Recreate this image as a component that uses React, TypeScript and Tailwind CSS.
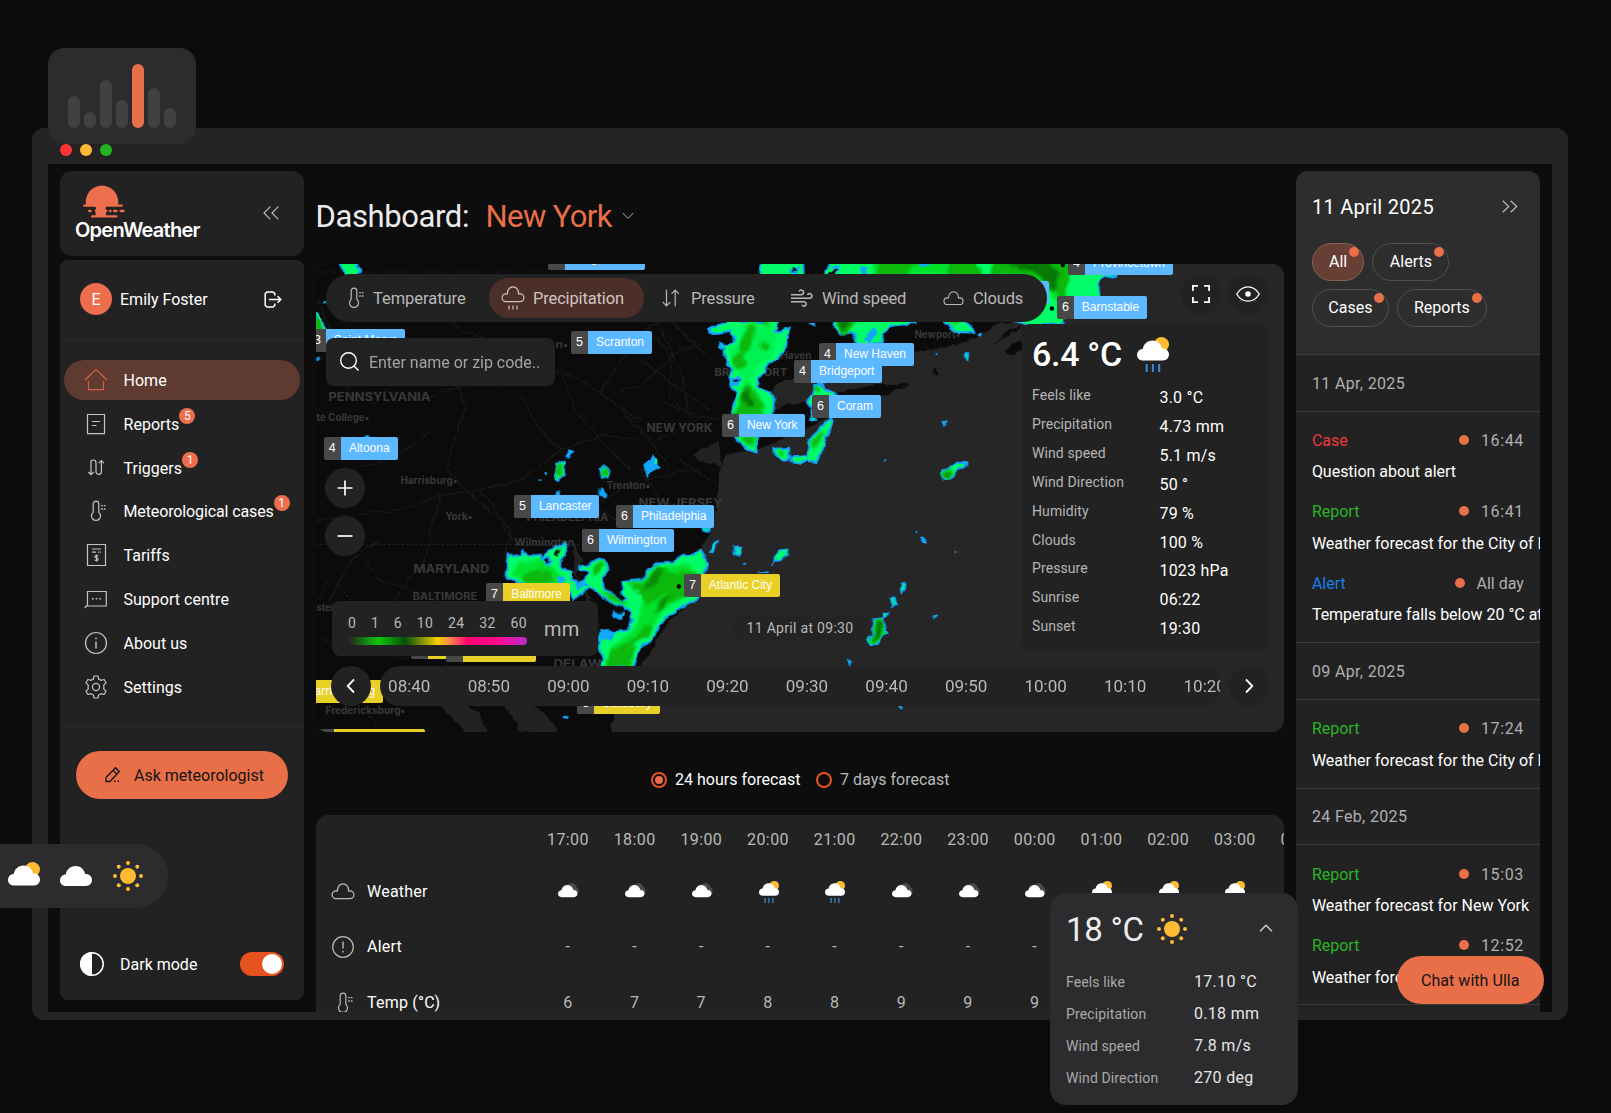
import React from "react";

type P = { className?: string };

/* ---------- icons ---------- */

const Thermo = ({ className = "" }: P) => (
  <svg className={className} width="16" height="22" viewBox="0 0 16 22" fill="none" stroke="currentColor" strokeWidth="1.2">
    <path d="M3.2 12.4V4a2.8 2.8 0 0 1 5.600 0v8.400a4.500 4.500 0 1 1-5.600 0Z" />
    <path d="M11.2 5.600h1.600M13.800 5.600h1.700M11.2 9h1.600M13.800 9h1.700" strokeWidth="1.400" />
  </svg>
);

const CLOUD_LINE =
  "M5 15.600h14a3.900 3.900 0 0 0 0-7.800c-.5 0-.9.1-1.300.2C17.700 3.900 15.400.8 12 .8S6.300 3.900 6.300 8C5.900 7.900 5.500 7.800 5 7.800a3.900 3.900 0 0 0 0 7.800Z";

const CloudLine = ({ className = "", w = 24 }: P & { w?: number }) => (
  <svg className={className} width={w} height={(w * 17) / 24} viewBox="0 0 24 17" fill="none" stroke="currentColor" strokeWidth="1.3">
    <path d={CLOUD_LINE} strokeLinejoin="round" />
  </svg>
);

const CLOUD = "M6 20C2.600 20 0 17.800 0 14.500S2.500 8.500 5.800 8.500C6.500 3.500 10.500 0 15.500 0s8.800 3.500 9.700 8.100C29.500 8 32 10.800 32 14s-2.500 6-6 6Z";

const CloudFill = ({ w = 32 }: { w?: number }) => (
  <svg width={w} height={(w * 20) / 32} viewBox="0 0 32 20">
    <path d={CLOUD} fill="#fff" />
  </svg>
);

const CloudSun = ({ w = 32, rain = false }: { w?: number; rain?: boolean }) => (
  <svg width={w} height={(w * 35) / 32} viewBox="0 0 32 35">
    <circle cx="24.500" cy="7.500" r="7.500" fill="#ffbb33" />
    <path d={CLOUD} transform="translate(0 3.500)" fill="#fff" />
    {rain && <path d="M9.700 27v8M15.900 27v8M22.200 27v8" stroke="#3a8bdc" strokeWidth="2" />}
  </svg>
);

const BrokenClouds = () => (
  <svg width="22" height="16" viewBox="0 0 22 16">
    <path d="M8.500 6a5 5 0 0 1 9.400-2.200c.4.700.6 1.200.8 1.800A3.600 3.600 0 0 1 19 12l-5 1Z" fill="#4a4a4a" />
    <path d={CLOUD} transform="translate(0 3) scale(.61)" fill="#fff" />
  </svg>
);

const Sun = () => (
  <svg width="32" height="32" viewBox="0 0 32 32" fill="#ffbb33">
    <circle cx="16" cy="16" r="8" />
    {[
      [16, 3], [16, 29], [3, 16], [29, 16], [6.800, 6.800], [25.200, 6.800], [6.800, 25.200], [25.200, 25.200],
    ].map(([x, y]) => (
      <circle key={`${x}-${y}`} cx={x} cy={y} r="2" />
    ))}
  </svg>
);

const S = ({ children, w = 24, h = 24, sw = 1.2, className = "" }: React.PropsWithChildren<{ w?: number; h?: number; sw?: number; className?: string }>) => (
  <svg className={className} width={w} height={h} viewBox={`0 0 ${w} ${h}`} fill="none" stroke="currentColor" strokeWidth={sw}>
    {children}
  </svg>
);

const HomeIcon = () => (
  <S>
    <path d="M1 12 12 1.500 23 12M4.500 13.200v8.500h15v-8.500" />
  </S>
);
const ReportIcon = () => (
  <S>
    <path d="M3.500 2.500h17v19.200h-17ZM8 9.500h8M8 13.500h4.500" />
  </S>
);
const TriggerIcon = () => (
  <S>
    <path d="M7 4.500v14M4.300 16 7 18.700 9.700 16M7 6.500a2.500 2.500 0 0 1 5 0v9.200a2.700 2.700 0 0 0 5.400 0V5M14.800 7.200l2.600-2.600L20 7.200" />
  </S>
);
const TariffIcon = () => (
  <S>
    <path d="M3.500 1.500h18v21h-18ZM8 6h9M8 9.200h4M14 9.200h1.200M16 9.200h1" />
    <path d="M14.200 13.200c-.4-.8-3.400-1-3.400.6 0 1.500 3.500.9 3.500 2.500 0 1.500-3.200 1.500-3.700.3M12.500 11.600v7" strokeWidth="1.100" />
  </S>
);
const SupportIcon = () => (
  <S>
    <path d="M.6 21l2.900-3V4.500h18.800V19H3" />
    <path d="M8 11.700h1.600M11.700 11.700h1.600M15.400 11.700H17" strokeWidth="1.600" />
  </S>
);
const InfoIcon = () => (
  <S>
    <circle cx="12" cy="12" r="10.500" />
    <path d="M12 10.500v7M12 6.500v1.700" strokeWidth="1.400" />
  </S>
);
const AlertIcon = () => (
  <S>
    <circle cx="12" cy="12" r="10.300" />
    <path d="M12 6.500v7M12 15.800v1.700" strokeWidth="1.400" />
  </S>
);
const GearIcon = () => (
  <S>
    <circle cx="12" cy="12" r="3.600" />
    <path
      strokeLinejoin="round"
      d="M10.100 1h3.800l.8 3.100a8 8 0 0 1 2.300 1.300l3.100-.9 1.900 3.300L19.700 10.100a8 8 0 0 1 0 3.800l2.300 2.300-1.900 3.300-3.100-.9a8 8 0 0 1-2.300 1.300l-.8 3.100h-3.800l-.8-3.100A8 8 0 0 1 7 18.600l-3.100.9L2 16.200l2.300-2.300a8 8 0 0 1 0-3.800L2 7.800l1.900-3.300 3.100.9a8 8 0 0 1 2.300-1.300Z"
    />
  </S>
);
const PressureIcon = () => (
  <S w={18} h={18}>
    <path d="M4.500.8v16M.8 13.200l3.700 3.800 3.700-3.800M13.200 17.300v-16M9.500 4.900l3.700-3.800 3.700 3.800" />
  </S>
);
const WindIcon = () => (
  <S w={22} h={18} sw={1.500}>
    <path d="M0 5.700h10.200a2.300 2.300 0 1 0-2.100-3.200M0 9.200h18.700a2.300 2.300 0 1 0-2.200-3.100M0 12.700h13a2.200 2.200 0 1 1-2 3.100" />
  </S>
);
const PrecipIcon = () => (
  <S w={24} h={24}>
    <path d={CLOUD_LINE} strokeLinejoin="round" />
    <path d="M8 19.500v4M12 19.500v4M16 19.500v4" />
  </S>
);

/* ---------- map ---------- */

type Pin = { x: number; y: number; w: number; n: number; name: string; yellow?: boolean };
const pins: Pin[] = [
  { x: 548.5, y: 247, w: 97, n: 4, name: "Binghamton" },
  { x: 309, y: 329, w: 96, n: 3, name: "Saint Marys" },
  { x: 571, y: 331, w: 81, n: 5, name: "Scranton" },
  { x: 323.8, y: 437, w: 74, n: 4, name: "Altoona" },
  { x: 514, y: 495, w: 85.5, n: 5, name: "Lancaster" },
  { x: 616, y: 505, w: 98.5, n: 6, name: "Philadelphia" },
  { x: 582, y: 529, w: 92.5, n: 6, name: "Wilmington" },
  { x: 486, y: 583, w: 84, n: 7, name: "Baltimore", yellow: true },
  { x: 684, y: 574, w: 96, n: 7, name: "Atlantic City", yellow: true },
  { x: 819, y: 343, w: 95, n: 4, name: "New Haven" },
  { x: 794, y: 360, w: 88.5, n: 4, name: "Bridgeport" },
  { x: 812, y: 395, w: 69, n: 6, name: "Coram" },
  { x: 722, y: 414, w: 83.5, n: 6, name: "New York" },
  { x: 957, y: 281, w: 92, n: 5, name: "Providence" },
  { x: 1057, y: 296, w: 90, n: 6, name: "Barnstable" },
  { x: 1068, y: 252, w: 105, n: 4, name: "Provincetown" },
  { x: 411, y: 636, w: 90, n: 8, name: "Arlington", yellow: true },
  { x: 446, y: 639.5, w: 90, n: 8, name: "Alexandria", yellow: true },
  { x: 281, y: 680, w: 102, n: 9, name: "Harrisonburg", yellow: true },
  { x: 577.5, y: 691.5, w: 82.5, n: 8, name: "Salisbury", yellow: true },
  { x: 317, y: 729, w: 108, n: 9, name: "Charlottesville", yellow: true },
];

const MapPin = ({ p }: { p: Pin }) => (
  <div
    className="absolute flex h-[22.500px] overflow-hidden rounded-[2px] font-['Liberation_Sans',Arial,sans-serif] text-[12px] leading-[22.500px] text-white"
    style={{ left: p.x - 315.6, top: p.y - 264, width: p.w }}
  >
    <span className="w-[17px] shrink-0 bg-[#484848] text-center text-[12.500px]">{p.n}</span>
    <span className={`flex-1 whitespace-nowrap text-center ${p.yellow ? "bg-[#e9d026]" : "bg-[#5cb8ff]"}`}>{p.name}</span>
  </div>
);

const places: [string, number, number, number, number][] = [
  ["PENNSYLVANIA", 328, 401, 102, 11.5],
  ["te College•", 316, 421, 53, 10],
  ["Harrisburg•", 400, 484, 57, 10],
  ["York•", 445, 520, 27, 10],
  ["Trenton•", 606, 489, 44, 10],
  ["NEW YORK", 646, 432, 66, 11.5],
  ["NEW JERSEY", 638, 507, 84, 11.5],
  ["PHILADELPHIA", 526, 521, 82, 10.5],
  ["Wilmington", 514, 546, 60, 10],
  ["MARYLAND", 413, 573, 76, 11.5],
  ["BALTIMORE", 412, 600, 65, 10.5],
  ["ster", 316, 611, 18, 10],
  ["DELAWARE", 553, 668, 74, 11.5],
  ["Fredericksburg•", 325, 714, 80, 10],
  ["Newport•", 914, 338, 46, 10],
  ["BRIDGEPORT", 714, 376, 73, 10.5],
  ["Haven", 780, 359, 31, 10],
  ["n•", 555, 348, 13, 10],
];

const MapCanvas = () => (
  <svg className="absolute inset-0" width="969" height="468" viewBox="315.6 264 969 468">
    <defs>
      <filter id="ragged" x="-5%" y="-5%" width="110%" height="110%" colorInterpolationFilters="sRGB">
        <feTurbulence type="fractalNoise" baseFrequency="0.11" numOctaves="2" seed="4" result="n" />
        <feDisplacementMap in="SourceGraphic" in2="n" scale="6" xChannelSelector="R" yChannelSelector="G" />
      </filter>
      <filter id="soft" x="-5%" y="-5%" width="110%" height="110%" colorInterpolationFilters="sRGB">
        <feGaussianBlur stdDeviation="5" />
      </filter>
    </defs>
    <rect x="315" y="264" width="970" height="468" fill="#262626" />
    <g filter="url(#ragged)">
      <path
        fill="#0b0b0b"
        d="M300 250H1110L1090 290 1060 318 1030 322 1010 322 993 326 978 336 955 345 925 350 905 354 870 358 845 368 800 376 775 384 768 402 790 404 815 400 850 390 880 384 911 384 890 393 862 402 835 414 800 432 760 448 725 455 719 473 717 503 709 535 697 555 700 580 690 602 665 625 652 650 636 670 618 700 606 745H300Z"
      />
      <path d="M768 392 745 428 728 434 790 402ZM692 455 718 440 722 466 700 462ZM440 706 462 728 470 745 490 740 478 712 460 704ZM500 700 520 732 560 735 545 712 525 702ZM572 540 582 560 576 575 590 600 604 640 596 620 574 575Z" fill="#222" />
      <path d="M1023 325 1008 336 993 344 1010 330ZM1022 338 1004 350 1010 356 1022 350ZM932 372 936 366 938 375Z" fill="#0b0b0b" />
    </g>
    <g fill="none" stroke="#1b1b1b" strokeWidth="1.100" filter="url(#ragged)">
      <path d="M318 300 330 330 350 395 385 392 430 396 470 384 500 386 530 382 560 370 600 392 615 405 640 420M458 384 465 410 452 445 446 468 470 495 500 520 515 545M600 392 622 360 645 330 660 322M430 430 405 450 380 462 350 470M316 520 350 515 400 510 440 495 480 490 520 480 560 450 600 435 640 440M560 370 575 410 600 440 630 470M440 495 430 530 425 560 400 590 380 620M480 490 510 530 505 560M620 390 640 385 680 350 700 345M660 330 680 370 690 420M520 395 540 430 560 450M365 560 380 580 410 590 440 600M380 540 350 560 330 600 350 620M320 640 360 650 400 660 440 650M640 470 660 500 700 520M600 500 640 480 690 470M690 300 720 320M430 300 460 330 520 350M640 300 670 310M360 700 380 732M470 620 450 660 430 700" />
      <path d="M640 330q40 20 30 50t50 40M660 400l40 20M655 440l40-20M680 460l30 20M650 300l60 60M620 410l30 30 20 30M560 500l40 10 30 20M640 360l40 30 30 20" />
    </g>
    <path d="M316 272H560M316 544.500H590M670 340 720 375M318 600 330 575 350 600" strokeDasharray="1.500 3" stroke="#2b2b2b" fill="none" />
    <g fill="#383838" fontFamily="Inter, sans-serif" fontWeight="700">
      {places.map(([t, x, y, w, s]) => (
        <text key={t} x={x} y={y} fontSize={s} textLength={w} lengthAdjust="spacingAndGlyphs">
          {t}
        </text>
      ))}
    </g>

    <g filter="url(#ragged)">
      {/* radar: upper half */}
      <g transform="translate(640 240) scale(.33333)" strokeLinejoin="round">
        <g fill="#00fd68" stroke="#12a6ff" strokeWidth="6">
          <path d="M262 246 204 266 206 282 235 281 266 272 283 285 280 308 262 320 236 306 240 318 252 324 255 360 266 378 276 385 272 420 276 445 290 455 278 500 276 560 286 600 322 626 345 637 350 590 382 560 398 520 400 475 388 455 350 440 352 415 378 395 384 370 410 358 432 330 440 290 448 262 405 278 410 246Z" />
          <path d="M364 60 358 110H490L488 60Z" />
          <path d="M580 60 552 90 552 110H1240V60Z" />
          <path d="M580 240 584 264 600 284 640 280 650 312H720L728 282 750 258 825 248V240Z" />
          <path d="M905 240 935 262 950 276 1000 278 993 262 972 240Z" />
          <path d="M515 462 522 432 545 432 556 450 580 458 590 476H528L524 545 512 540 514 505 500 485Z" />
          <path d="M572 535 518 588 505 612 498 648 455 652 450 664 480 672 500 662 526 670 542 640 560 585 580 540Z" />
          <path d="M402 626 446 624 446 658 425 660 403 648Z" />
          <path d="M900 698 925 684 955 668 978 670 976 680 950 692 935 712 912 718Z" />
          <ellipse cx="977" cy="351" rx="6" ry="9" />
        </g>
        <path
          d="M1120 244 1165 254 1268 246 1275 180 1380 176 1376 140 1374 124 1384 112 1404 112 1430 104V60H1100Z"
          fill="#00fd68"
        />
        <path d="M1120 246 1165 256 1270 248M1376 165 1374 124 1384 112 1404 112 1430 104" fill="none" stroke="#12a6ff" strokeWidth="6" />
        <g fill="#00e22c" filter="url(#soft)">
          <path d="M310 250 390 250 410 290 400 340 350 380 330 430 362 470 366 530 330 560 284 540 300 480 310 430 276 370 274 330 300 300Z" opacity=".4" />
          <path d="M700 60H920V102H700ZM1060 60H1300L1260 200 1200 120Z" />
        </g>
        <g fill="#0cb80c" filter="url(#soft)">
          <path d="M325 258 345 254 340 290 322 330 304 350 324 368 305 387 278 378 274 352 298 338 302 298Z" />
          <path d="M360 240h30l-12 22ZM372 302l14 18-14 14-14-14ZM318 430 345 455 370 500 366 528 280 526 300 480Z" />
          <path d="M292 588h52l-4 30-22-6Z" />
          <path d="M590 240h52l-20 46-20-4ZM914 238h50l-18 20ZM530 432l14 18-14 8-12-12ZM554 568l-18 40-18 22-6-18 20-28ZM412 630l22 6-12 16ZM902 702l22-14 16 8-10 16-14 4Z" />
          <path d="M716 60H835L790 110H708ZM925 60H1000L1030 110H916ZM1060 60 1300 60 1270 190 1240 150 1200 106H1050Z" />
        </g>
        <g fill="#067a06" filter="url(#soft)">
          <path d="M304 470 316 442 328 470 342 492 320 502ZM1090 66 1210 66 1262 98 1236 160 1200 104ZM592 246 628 246 610 276ZM910 704l14-8 8 4-12 10Z" />
        </g>
        <g fill="#12a6ff">
          <path d="M8 672 28 662 36 640 46 660 62 680 40 690 20 712Z" />
          <path d="M676 282 708 264 714 280 690 306 672 300ZM905 540 925 540 912 562ZM660 84 684 80 682 102H660ZM276 410 298 410 296 440 276 440ZM834 66h34l-10 16h-18ZM1010 280l18-6-8 16ZM500 246h24v14ZM450 86 480 74 470 102H450ZM570 80 600 74 590 102Z" />
          <circle cx="734" cy="662" r="4" />
          <circle cx="890" cy="343" r="4" />
        </g>
        <path d="M48 672a6 6 0 1 1 .1 0Z" fill="#00fd9a" />
        <path d="M286 415l8 6-8 8-5-7ZM462 80 470 88 452 98ZM582 86 594 88 578 102H562Z" fill="#0b0b0b" />
      </g>

      {/* radar: western edge */}
      <path d="M336 258h18l6 13-8 7-6-2Z" fill="#00fd68" stroke="#12a6ff" strokeWidth="2" />
      <path d="M308 310q14 4 16 22l-4 6h-12Z" fill="#0cb80c" stroke="#12d6c0" strokeWidth="2.500" />
      <g fill="#12a6ff">
        <circle cx="325" cy="303" r="1.500" />
        <circle cx="317" cy="358.500" r="1.500" />
        <circle cx="366" cy="437" r="2" />
        <circle cx="545" cy="473.500" r="1.500" />
        <circle cx="540" cy="481" r="1" />
        <path d="M566 458 568 449 572 451 570 459ZM556 492 558 490 561 497H554ZM600 487 606 494 604 499 598 494ZM706 330 712 325V336Z" />
      </g>

      {/* radar: Chesapeake and Delaware */}
      <g transform="translate(310 460) scale(.33333)" strokeLinejoin="round">
        <g fill="#00fd68" stroke="#12a6ff" strokeWidth="6">
          <path d="M735 55 740 10 765 2 762 45 745 60ZM870 28 882 14 898 32 892 52 874 56Z" />
          <path d="M592 280 604 292 634 285 640 270 652 290 688 284 694 300 712 270 730 262 755 256 768 250 766 290 746 304 756 325 784 335 784 358 802 370 820 362 838 338 806 328 806 320 836 314 862 292 884 296 894 326 876 360 882 385 916 412 936 424 950 416 934 396 930 366 996 360 1014 330 1036 310 1090 308 1112 288 1150 286 1170 268 1180 284 1192 310 1178 350 1180 400 1150 420 1126 432 1100 450 1064 475 1040 510 1022 545 990 560 970 620 870 622 880 600 866 560 866 520 900 516 950 512 966 484 960 456 940 440 905 430 865 400 838 378 815 400 790 420 770 376 640 374 586 350Z" />
        </g>
        <g fill="#00e22c" filter="url(#soft)">
          <path d="M620 310 700 300 750 340 760 366 640 366 606 346ZM1000 370 1040 325 1130 310 1155 340 1155 385 1110 420 1050 460 1010 530 960 545 950 618 894 618 904 565 940 535 980 495 990 450Z" />
        </g>
        <g fill="#0cb80c" filter="url(#soft)">
          <path d="M640 350 680 326 722 340 734 372H640ZM735 44 745 8 760 16 752 50ZM872 36 884 20 896 36 882 54Z" />
          <path d="M950 370 1000 366 1036 318 1060 330 1092 340 1062 400 1010 440 990 400ZM850 320 876 296 884 316 850 354ZM870 388 940 424 956 438 900 420ZM1080 350l40-20 40 10-4 50-60 30-40 20ZM920 560 990 526 1000 496 1024 498 1010 532 972 552 960 620H886L900 580Z" />
        </g>
        <path d="M1040 322 1056 330 1040 370 1000 392 1014 360ZM1050 420l30-20-20 44-24 16Z" fill="#078c07" filter="url(#soft)" />
        <g fill="#12a6ff">
          <path d="M742 345l20 4 4 16-18 4ZM700 292l14-4 10 16-12 18-10-12ZM790 366l50 2-40 20ZM906 450 926 460 940 450 930 480 910 476ZM870 508l40 4-4 30-36-4Z" />
        </g>
        <path d="M704 298l8-4 3 10-7 4ZM736 270l10-4-4 24-12-6Z" fill="#0b0b0b" />
        <circle cx="764" cy="772" r="7" fill="#12a6ff" />
      </g>

      {/* radar: Atlantic cells */}
      <g transform="translate(640 460) scale(.33333)" fill="#00e5a0" stroke="#12a6ff" strokeWidth="5" strokeLinejoin="round">
        <path d="M402 288 420 270 442 268 440 284 415 302 402 302Z" fill="#00fd68" />
        <path d="M284 260 300 260 302 280 292 290 282 278ZM208 275 216 250 230 242 218 270ZM186 204 208 204 204 216 190 214Z" />
        <path d="M784 370 796 368 794 388 784 398 780 386ZM750 412 762 412 770 438 754 442ZM730 458 746 454 744 468 730 472ZM626 600 634 600 630 616Z" />
        <path d="M696 478 728 474 734 500 742 520 722 532 716 548 690 556 680 546 698 524Z" fill="#00e02c" />
        <path d="M706 482 726 484 728 512 714 534 694 548 706 510Z" fill="#067a06" stroke="none" filter="url(#soft)" />
        <path d="M826 214 832 222M838 230 854 236 856 246 846 244ZM312 308 316 314M396 318 402 302M355 340 388 336" fill="#12a6ff" />
        <g stroke="none" fill="#12a6ff">
          <circle cx="884" cy="469" r="5" />
          <circle cx="945" cy="276" r="3" />
          <path d="M774 738h14l-7 9Z" />
        </g>
      </g>
    </g>
    <circle cx="678.500" cy="586.500" r="2.200" fill="#000" />
    <circle cx="1051.500" cy="308.500" r="2.200" fill="#000" />
    <circle cx="1062.500" cy="265" r="2.200" fill="#000" />
  </svg>
);

const info: [string, string][] = [
  ["Feels like", "3.0 °C"],
  ["Precipitation", "4.73 mm"],
  ["Wind speed", "5.1 m/s"],
  ["Wind Direction", "50 °"],
  ["Humidity", "79 %"],
  ["Clouds", "100 %"],
  ["Pressure", "1023 hPa"],
  ["Sunrise", "06:22"],
  ["Sunset", "19:30"],
];

const times = ["08:40", "08:50", "09:00", "09:10", "09:20", "09:30", "09:40", "09:50", "10:00", "10:10", "10:20"];

const RoundBtn = ({ className = "", children }: React.PropsWithChildren<P>) => (
  <div className={`absolute flex size-10 items-center justify-center rounded-full bg-[#222] text-white ${className}`}>{children}</div>
);

const WeatherMap = () => (
  <div className="relative h-[468px] overflow-hidden rounded-xl">
    <MapCanvas />
    {pins.map((p) => (
      <MapPin key={p.name} p={p} />
    ))}

    <div className="absolute top-[10px] left-[10.400px] flex h-12 w-[721px] items-center rounded-full bg-[#222] text-[16.500px] tracking-[-0.15px] text-[#b9b9b9]">
      <div className="flex w-[163px] items-center gap-[9px] pl-[22px] tracking-[-0.05px]">
        <Thermo className="shrink-0" />
        <span className="translate-y-px">Temperature</span>
      </div>
      <div className="flex h-10 w-[155px] items-center gap-2 rounded-full bg-[#4d2f29] pl-3 text-[#cfc6c3]">
        <PrecipIcon />
        <span className="translate-y-px">Precipitation</span>
      </div>
      <div className="flex w-[128px] items-center gap-[11px] pl-[18px]">
        <PressureIcon />
        <span className="translate-y-px">Pressure</span>
      </div>
      <div className="flex w-[153px] items-center gap-[9px] pl-[19px]">
        <WindIcon />
        <span className="translate-y-px">Wind speed</span>
      </div>
      <div className="flex items-center gap-[9px] pl-[18px]">
        <CloudLine w={21} />
        <span className="translate-y-px">Clouds</span>
      </div>
    </div>

    <div className="absolute top-[74px] left-[10.400px] flex h-[47.500px] w-[229.500px] items-center gap-[10px] rounded-lg bg-[#222] pl-[14px] text-[16px] tracking-[-0.03px] text-[#a3a3a3]">
      <S w={19} h={19} sw={1.400} className="text-white">
        <circle cx="8.500" cy="8.500" r="7.800" />
        <path d="m14 14 4.500 4.500" />
      </S>
      <span className="translate-y-px">Enter name or zip code..</span>
    </div>

    <RoundBtn className="top-[204px] left-[9.900px]">
      <S w={16} h={16} sw={1.700}>
        <path d="M8 .5v15M.5 8h15" />
      </S>
    </RoundBtn>
    <RoundBtn className="top-[252px] left-[9.900px]">
      <S w={16} h={16} sw={1.700}>
        <path d="M.5 8h15" />
      </S>
    </RoundBtn>

    <RoundBtn className="top-[10px] left-[865.400px]">
      <S w={18} h={18} sw={1.800}>
        <path d="M.9 6V.9H6M12 .9h5.100V6M17.100 12v5.100H12M6 17.100H.9V12" />
      </S>
    </RoundBtn>
    <RoundBtn className="top-[10px] left-[912.900px]">
      <S w={24} h={16} sw={1.300}>
        <path d="M.7 8C3.500 3.300 7.500.8 12 .8S20.500 3.300 23.300 8C20.500 12.700 16.500 15.200 12 15.200S3.500 12.700.7 8Z" />
        <circle cx="12" cy="8" r="2.800" fill="currentColor" stroke="none" />
      </S>
    </RoundBtn>

    <div className="absolute top-[60px] left-[706.400px] h-[326px] w-[246px] rounded-lg bg-[#222] pl-[10px]">
      <div className="flex h-[60px] items-center gap-[15px] text-[34px] font-medium tracking-[-0.3px] text-white">
        <span>6.4 °C</span>
        <CloudSun rain />
      </div>
      {info.map(([k, v]) => (
        <div key={k} className="flex h-[28.850px] items-center">
          <span className="w-[127.500px] pb-[5px] text-[14px] tracking-[0.1px] text-[#b5b5b5]">{k}</span>
          <span className="text-[16px] tracking-[0.2px] text-white">{v}</span>
        </div>
      ))}
    </div>

    <div className="absolute top-[337px] left-[16.400px] flex h-[55px] w-[266px] items-center rounded-lg bg-[#222] text-[#b9b9b9]">
      <div className="ml-4 w-[179px]">
        <div className="flex h-[23px] items-center justify-between text-[14px] tracking-[0.4px]">
          {["0", "1", "6", "10", "24", "32", "60"].map((n) => (
            <span key={n}>{n}</span>
          ))}
        </div>
        <div className="mt-[2px] mb-[1px] h-2 rounded-r-full bg-[linear-gradient(90deg,#222_0%,#0bc80b_17%,#064f06_32%,#f5d000_50%,#ff7a50_58%,#ff0070_67%,#ff0a90_84%,#b52ec8_100%)]" />
      </div>
      <span className="ml-[17px] text-[20px] tracking-[0.3px]">mm</span>
    </div>

    <div className="absolute top-[351px] left-[416.400px] flex h-7 w-[136px] items-center justify-center rounded-full bg-[#242424] pb-px text-[14px] tracking-[0.3px] text-[#b9b9b9]">
      11 April at 09:30
    </div>

    <RoundBtn className="top-[402px] left-[15.400px]">
      <S w={10} h={16} sw={1.800}>
        <path d="M8 1.500 1.700 8 8 14.500" />
      </S>
    </RoundBtn>
    <div className="absolute top-[402px] left-[64.200px] h-10 w-[841px] overflow-hidden rounded-full bg-[#222]">
      <div className="flex h-[42px] items-center text-[17px] text-[#b9b9b9]">
        {times.map((t) => (
          <span key={t} className="w-[79.550px] shrink-0 pl-[8.300px]">
            {t}
          </span>
        ))}
      </div>
    </div>
    <RoundBtn className="top-[402px] left-[913.900px]">
      <S w={10} h={16} sw={1.800}>
        <path d="M2 1.500 8.300 8 2 14.500" />
      </S>
    </RoundBtn>
  </div>
);

/* ---------- sidebar ---------- */

const nav: [React.ReactNode, string, string?][] = [
  [<HomeIcon />, "Home"],
  [<ReportIcon />, "Reports", "5"],
  [<TriggerIcon />, "Triggers", "1"],
  [<Thermo className="ml-1" />, "Meteorological cases", "1"],
  [<TariffIcon />, "Tariffs"],
  [<SupportIcon />, "Support centre"],
  [<InfoIcon />, "About us"],
  [<GearIcon />, "Settings"],
];

const Sidebar = () => (
  <aside className="flex w-[243.500px] shrink-0 flex-col gap-1">
    <div className="flex h-[84.500px] items-center justify-between rounded-xl bg-[#222] pr-[25px] pl-[15px]">
      <div>
        <svg className="ml-2" width="42" height="33" viewBox="0 0 42 33" fill="#ec6e4c">
          <path d="M3 20A16.300 16.300 0 1 1 35 20Z" />
          <path
            d="M1.200 20.600h37.600M6.200 26h1.400M13 26h10.500M27 26h.5M31 26h2.500M37.600 26h3M9 31.300h24.500"
            stroke="#ec6e4c"
            strokeWidth="2.300"
            strokeLinecap="round"
          />
          <rect x="12.500" y="20" width="10.500" height="11" />
          <path d="M22.500 23.300h10M9 23.300h4" stroke="#222" strokeWidth="1.500" />
        </svg>
        <div className="font-['Inter',sans-serif] text-[20px] leading-6 font-semibold tracking-[-0.75px] text-white">OpenWeather</div>
      </div>
      <S w={16} h={14} className="text-[#bbb]">
        <path d="M7.300.7 1 7l6.300 6.300M15.300.7 9 7l6.300 6.300" />
      </S>
    </div>

    <div className="flex h-[740.500px] flex-col rounded-lg bg-[#222] text-[16px] text-white">
      <div className="flex h-20 items-center border-b border-[#2c2c2c] pr-[21.500px] pl-5">
        <span className="flex size-8 items-center justify-center rounded-full bg-[#ec6e4c] pt-[2px]">E</span>
        <span className="ml-2 flex-1 translate-y-px">Emily Foster</span>
        <S w={18} h={17} sw={1.500}>
          <path d="M10.800 4.500V2.600L9 1H3L1.200 2.600v11.800L3 16h6l1.800-1.600v-1.900M5 8.500h11.800M13.500 5.200l3.300 3.300-3.300 3.300" />
        </S>
      </div>
      <nav className="h-[387px] border-b border-[#2c2c2c] pt-[18.700px]">
        {nav.map(([icon, label, badge], i) => (
          <div key={label} className="flex h-[43.800px] items-center px-1">
            <div className={`flex h-10 flex-1 items-center rounded-full pl-[19.500px] ${i === 0 ? "bg-[#5e3a30]" : ""}`}>
              <span className={`flex size-6 items-center justify-center ${i === 0 ? "text-[#d9603f]" : "text-[#c4c4c4]"}`}>{icon}</span>
              <span className={`ml-[16px] translate-y-px ${label.length > 15 ? "tracking-[-0.12px]" : "tracking-[0.02px]"}`}>{label}</span>
              {badge && (
                <span className="-mt-4 flex size-4 items-center justify-center rounded-full bg-[#ec6e4c] text-[12px]">
                  {badge}
                </span>
              )}
            </div>
          </div>
        ))}
      </nav>
      <button className="mt-6 ml-[15.500px] flex h-12 w-[212px] items-center justify-center gap-[13px] rounded-full bg-[#e86f47] pl-[6px] text-[#141414]">
        <S w={16} h={17} sw={1.300}>
          <path d="M1 15.500V11.500L10.500 1.700l3.800 3.800L5 15.500ZM8 4.300l3.800 3.800" />
          <path d="M9 15.300h1.500M12.500 15.300H14" strokeWidth="1.600" />
        </S>
        <span className="translate-y-px">Ask meteorologist</span>
      </button>
      <div className="mt-auto mb-6 flex items-center pr-[19.500px] pl-5">
        <svg width="24" height="24" viewBox="0 0 24 24">
          <circle cx="12" cy="12" r="11.200" fill="none" stroke="#fff" strokeWidth="1.500" />
          <path d="M12 0a12 12 0 0 0 0 24Z" fill="#fff" />
        </svg>
        <span className="ml-4 flex-1 translate-y-px">Dark mode</span>
        <span className="flex h-6 w-11 items-center justify-end rounded-full bg-[#e65320] pr-[2px]">
          <span className="size-5 rounded-full bg-white" />
        </span>
      </div>
    </div>
  </aside>
);

/* ---------- forecast table ---------- */

const hours = ["17:00", "18:00", "19:00", "20:00", "21:00", "22:00", "23:00", "00:00", "01:00", "02:00", "03:00", "04:00"];
const sky = ["b", "b", "b", "r", "r", "b", "b", "b", "s", "s", "s", "s"];
const temps = [6, 7, 7, 8, 8, 9, 9, 9, 8, 8, 8, 7];

const Row = ({ icon, label, cells, className = "h-[55.500px]" }: { icon?: React.ReactNode; label?: string; cells: React.ReactNode[]; className?: string }) => (
  <div className={`flex shrink-0 items-center ${className}`}>
    <div className="flex w-[219px] shrink-0 items-center pl-[15.500px]">
      <span className="flex w-6 justify-center text-[#b9b9b9]">{icon}</span>
      <span className="ml-3 text-[16px] tracking-[0.2px] text-white">{label}</span>
    </div>
    {cells.map((c, i) => (
      <div key={i} className="flex w-[66.700px] shrink-0 justify-center text-[16px] tracking-[0.4px] text-[#b9b9b9]">
        {c}
      </div>
    ))}
  </div>
);

const Forecast = () => (
  <div className="h-[197px] overflow-hidden rounded-t-xl bg-[#222]">
    <Row cells={hours} className="h-[50px]" />
    <Row
      className="h-[53.500px]"
      icon={<CloudLine />}
      label="Weather"
      cells={sky.map((s, i) =>
        s === "b" ? (
          <span key={i} className="pb-[3px] pl-[3px]"><BrokenClouds /></span>
        ) : (
          <span key={i} className="h-[22px] pl-[1px]"><CloudSun w={20} rain={s === "r"} /></span>
        ),
      )}
    />
    <Row className="h-[56.500px]" icon={<AlertIcon />} label="Alert" cells={hours.map(() => "-")} />
    <Row icon={<Thermo className="ml-1" />} label="Temp (°C)" cells={temps} />
  </div>
);

const Main = () => (
  <main className="flex w-[968.700px] shrink-0 flex-col">
    <div className="flex h-[93px] items-center text-[31px] tracking-[-0.6px]">
      <h1 className="w-[170px] tracking-[-0.4px] text-[#ececec]">Dashboard:</h1>
      <span className="text-[#e86f47]">New York</span>
      <S w={12} h={8} sw={1} className="mb-1 ml-[10px] text-[#aaa]">
        <path d="m.8 1 5.200 5.500L11.200 1" />
      </S>
    </div>
    <WeatherMap />
    <div className="flex h-[83px] items-center pt-[12px] pl-[335.500px] text-[16px]">
      <span className="flex size-4 items-center justify-center rounded-full border-2 border-[#e65320]">
        <span className="size-2 rounded-full bg-[#ec6e4c]" />
      </span>
      <span className="w-[149px] pt-px pl-2 whitespace-nowrap text-white">24 hours forecast</span>
      <span className="size-4 rounded-full border-2 border-[#e65320]" />
      <span className="pt-px pl-2 text-[#b9b9b9]">7 days forecast</span>
    </div>
    <Forecast />
  </main>
);

/* ---------- notifications ---------- */

const Day = ({ children, first }: React.PropsWithChildren<{ first?: boolean }>) => (
  <div className={`flex items-center border-b border-[#3a3a3a] pt-[2px] pl-[15.500px] text-[16px] tracking-[0.35px] text-[#b0b0b0] ${first ? "h-[57px]" : "h-[56.500px]"}`}>{children}</div>
);

const Entry = ({ kind, time, text }: { kind: "Case" | "Report" | "Alert"; time: string; text: string }) => (
  <div className="h-[71.700px] pl-[15.500px] text-[16px]">
    <div className="flex h-[30px] items-center pr-4">
      <span className={`flex-1 translate-y-px ${kind === "Case" ? "text-[#f03a3a]" : kind === "Alert" ? "text-[#1780e6]" : "text-[#28b428]"}`}>{kind}</span>
      <span className="mr-3 size-[10px] rounded-full bg-[#e86f47]" />
      <span className={`translate-y-px text-[#b0b0b0] ${kind === "Alert" ? "" : "tracking-[0.6px]"}`}>{time}</span>
    </div>
    <div className="flex h-[35px] items-center overflow-hidden tracking-[-0.02px] whitespace-nowrap text-white">{text}</div>
  </div>
);

const Chip = ({ children, className = "" }: React.PropsWithChildren<P>) => (
  <span className={`relative flex h-[38px] items-center justify-center rounded-full border pt-px ${className}`}>
    {children}
    <span className="absolute top-[3px] right-1 size-[10px] rounded-full bg-[#e86f47]" />
  </span>
);

const Notifications = () => (
  <aside className="w-[243.500px] shrink-0 overflow-hidden rounded-t-xl bg-[#222]">
    <div className="h-[183.500px] border-b border-[#3c3c3c] bg-[#2d2d2d] pt-[19px] pl-[15.500px] text-white">
      <div className="flex h-8 items-center justify-between pr-[22px] text-[20px] tracking-[0.3px]">
        <span className="translate-y-px">11 April 2025</span>
        <S w={16} h={13} className="text-[#bbb]">
          <path d="m.7.700 6 5.800-6 5.800M8.700.700l6 5.800-6 5.800" />
        </S>
      </div>
      <div className="mt-[20.500px] flex flex-wrap gap-x-2 gap-y-[8px] pr-8 text-[16px]">
        <Chip className="w-[52.500px] border-[#7f6255] bg-[#673f34]">All</Chip>
        <Chip className="w-[77px] border-[#4e4e4e]">Alerts</Chip>
        <Chip className="w-[77px] border-[#4e4e4e]">Cases</Chip>
        <Chip className="w-[90px] border-[#4e4e4e]">Reports</Chip>
      </div>
    </div>
    <Day first>11 Apr, 2025</Day>
    <div className="h-[231.500px] border-b border-[#3a3a3a] pt-[13px]">
      <Entry kind="Case" time="16:44" text="Question about alert" />
      <Entry kind="Report" time="16:41" text="Weather forecast for the City of New York" />
      <Entry kind="Alert" time="All day" text="Temperature falls below 20 °C at night" />
    </div>
    <Day>09 Apr, 2025</Day>
    <div className="h-[89px] border-b border-[#3a3a3a] pt-[13.500px]">
      <Entry kind="Report" time="17:24" text="Weather forecast for the City of New York" />
    </div>
    <Day>24 Feb, 2025</Day>
    <div className="h-[160px] border-b border-[#3a3a3a] pt-[13.500px]">
      <Entry kind="Report" time="15:03" text="Weather forecast for New York" />
      <Entry kind="Report" time="12:52" text="Weather forecast for New York" />
    </div>
  </aside>
);

/* ---------- floating widgets ---------- */

const BarsWidget = () => (
  <div className="absolute top-12 left-12 flex h-24 w-[148px] items-end justify-center gap-1 rounded-2xl bg-[#2c2c2e] pb-4">
    <span className="h-8 w-3 rounded-full bg-[#414141]" />
    <span className="h-4 w-3 rounded-full bg-[#414141]" />
    <span className="h-12 w-3 rounded-full bg-[#414141]" />
    <span className="h-7 w-3 rounded-full bg-[#414141]" />
    <span className="h-16 w-3 rounded-full bg-[#e86f47]" />
    <span className="h-10 w-3 rounded-full bg-[#414141]" />
    <span className="h-5 w-3 rounded-full bg-[#414141]" />
  </div>
);

const SkyWidget = () => (
  <div className="absolute top-[844px] -left-10 flex h-16 w-[208px] items-center justify-end gap-5 rounded-full bg-[#2c2c2e] pr-6">
    <span className="mt-[6px] h-[35px]"><CloudSun /></span>
    <CloudFill />
    <Sun />
  </div>
);

const today: [string, string][] = [
  ["Feels like", "17.10 °C"],
  ["Precipitation", "0.18 mm"],
  ["Wind speed", "7.8 m/s"],
  ["Wind Direction", "270 deg"],
];

const TodayCard = () => (
  <div className="absolute top-[893px] left-[1050px] h-[212px] w-[248px] rounded-2xl bg-[#2c2c2e] pt-4 pl-4">
    <div className="flex h-10 items-center text-[33px] tracking-[-0.3px] text-[#ececec]">
      <span className="w-[90px] translate-y-px whitespace-nowrap">18 °C</span>
      <Sun />
      <S w={14} h={8} sw={1.500} className="mb-[2px] ml-[71px] text-[#ccc]">
        <path d="m1 7.300 6-6 6 6" />
      </S>
    </div>
    <div className="pt-[17px]">
      {today.map(([k, v]) => (
        <div key={k} className="flex h-8 items-center">
          <span className="w-32 text-[14px] tracking-[0.12px] text-[#a9a9a9]">{k}</span>
          <span className="text-[16px] tracking-[0.3px] text-[#e6e6e6]">{v}</span>
        </div>
      ))}
    </div>
  </div>
);

export default function App() {
  return (
    <div className="relative h-[1113px] w-[1611px] overflow-hidden bg-[#0b0b0b] pt-32 pl-8 font-['Roboto',sans-serif]">
      <div className="h-[892px] w-[1536px] rounded-xl bg-[#252324] px-4">
        <div className="flex h-9 gap-2 pt-4 pl-3">
          <span className="size-3 rounded-full bg-[#ff3333]" />
          <span className="size-3 rounded-full bg-[#ffbb33]" />
          <span className="size-3 rounded-full bg-[#22b422]" />
        </div>
        <div className="flex h-[848px] gap-[12.100px] overflow-hidden bg-[#0d0d0d] pt-[7px] pl-3">
          <Sidebar />
          <Main />
          <Notifications />
        </div>
      </div>
      <button className="absolute top-[956px] left-[1397px] h-12 w-[146.500px] rounded-full bg-[#e86f47] pt-[2px] text-[16px] tracking-[0.05px] text-[#141414]">
        Chat with Ulla
      </button>
      <BarsWidget />
      <SkyWidget />
      <TodayCard />
    </div>
  );
}
